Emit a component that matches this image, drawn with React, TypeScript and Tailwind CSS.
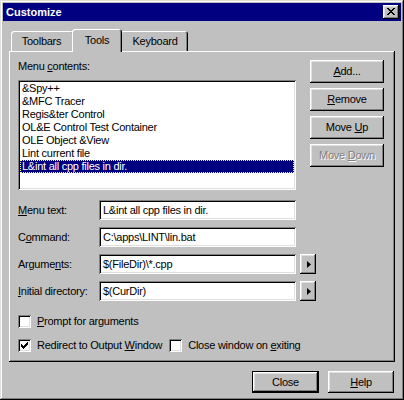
import React from "react";

// Win95 bevels
const raised =
  "shadow-[inset_-1px_-1px_0_#000,inset_1px_1px_0_#fff,inset_-2px_-2px_0_#808080,inset_2px_2px_0_#dfdfdf]";
const sunken =
  "shadow-[inset_1px_1px_0_#808080,inset_-1px_-1px_0_#fff,inset_2px_2px_0_#000,inset_-2px_-2px_0_#dfdfdf]";

const U: React.FC<{ children: React.ReactNode }> = ({ children }) => (
  <span className="underline underline-offset-[1px] decoration-1">{children}</span>
);

const menuItems = [
  "&Spy++",
  "&MFC Tracer",
  "Regis&ter Control",
  "OL&E Control Test Container",
  "OLE Object &View",
  "Lint current file",
  "L&int all cpp files in dir.",
];

const SideButton: React.FC<{ children: React.ReactNode; disabled?: boolean }> = ({
  children,
  disabled,
}) => (
  <div
    className={`w-[74px] h-[23px] flex items-center justify-center bg-[#c0c0c0] ${raised} ${
      disabled ? "text-[#808080] [text-shadow:1px_1px_0_#fff]" : "text-black"
    }`}
  >
    {children}
  </div>
);

const ArrowButton = () => (
  <div className={`ml-[4px] w-[16px] h-[20px] flex items-center justify-center bg-[#c0c0c0] ${raised}`}>
    <svg width="4" height="7" viewBox="0 0 4 7" className="ml-[1px]">
      <path d="M0 0 L4 3.5 L0 7 Z" fill="#000" />
    </svg>
  </div>
);

const Field: React.FC<{ label: React.ReactNode; value: string; arrow?: boolean }> = ({
  label,
  value,
  arrow,
}) => (
  <div className="flex items-center h-[20px]">
    <div className="w-[81px]">{label}</div>
    <div className={`w-[197px] h-[20px] bg-white flex items-center pl-[4px] ${sunken}`}>
      {value}
    </div>
    {arrow && <ArrowButton />}
  </div>
);

const Checkbox: React.FC<{ checked?: boolean }> = ({ checked }) => (
  <div className={`w-[13px] h-[13px] bg-white flex items-center justify-center shrink-0 ${sunken}`}>
    {checked && (
      <svg width="7" height="7" viewBox="0 0 7 7" shapeRendering="crispEdges">
        <path
          d="M0 2h1v1h1v1h1v-1h1v-1h1v-1h1v-1h1v3h-1v1h-1v1h-1v1h-1v1h-1v-1h-1v-1h-1v-1h-1z"
          fill="#000"
        />
      </svg>
    )}
  </div>
);

export default function App() {
  return (
    <div
      className="w-[404px] h-[400px] bg-[#c0c0c0] p-[3px] text-black text-[11px] leading-[13px] tracking-[-0.25px] font-['Liberation_Sans',Arial,sans-serif] shadow-[inset_-1px_-1px_0_#000,inset_1px_1px_0_#dfdfdf,inset_-2px_-2px_0_#808080,inset_2px_2px_0_#fff]"
    >
      {/* title bar */}
      <div className="h-[18px] bg-[#000080] flex items-center justify-between pl-[3px] pr-[2px]">
        <span className="text-white font-bold tracking-normal leading-[18px]">Customize</span>
        <div className={`w-[16px] h-[14px] bg-[#c0c0c0] flex items-center justify-center ${raised}`}>
          <svg width="8" height="7" viewBox="0 0 8 7" shapeRendering="crispEdges" className="-mt-[1px]">
            <path
              d="M0 0h2v1h1v1h2v-1h1v-1h2v1h-1v1h-1v1h-1v1h1v1h1v1h1v1h-2v-1h-1v-1h-2v1h-1v1h-2v-1h1v-1h1v-1h1v-1h-1v-1h-1v-1h-1z"
              fill="#000"
            />
          </svg>
        </div>
      </div>

      <div className="mx-[6px] mt-[8px]">
        {/* tabs */}
        <div className="relative z-10 flex items-end h-[22px] pl-[2px]">
          <div className="w-[63px] h-[20px] flex items-center justify-center pr-[2px] rounded-t-[3px] shadow-[inset_1px_1px_0_#fff,inset_-1px_0_0_#000,inset_-2px_0_0_#808080]">
            Toolbars
          </div>
          <div className="relative z-10 -ml-[2px] w-[50px] h-[23px] -mb-[1px] pb-[1px] flex items-center justify-center bg-[#c0c0c0] rounded-t-[3px] shadow-[inset_1px_1px_0_#fff,inset_-1px_0_0_#000,inset_-2px_0_0_#808080]">
            Tools
          </div>
          <div className="-ml-[2px] w-[68px] h-[20px] flex items-center justify-center pl-[2px] rounded-t-[3px] shadow-[inset_1px_1px_0_#fff,inset_-1px_0_0_#000,inset_-2px_0_0_#808080]">
            Keyboard
          </div>
        </div>

        {/* panel */}
        <div className="h-[311px] pl-[9px] shadow-[inset_-1px_-1px_0_#000,inset_1px_1px_0_#fff,inset_-2px_-2px_0_#808080]">
          <div className="flex pt-[9px]">
            <div className="w-[278px]">
              <div className="h-[20px]">
                Menu <U>c</U>ontents:
              </div>
              <div className={`h-[110px] bg-white p-[2px] ${sunken}`}>
                {menuItems.map((item, i) =>
                  i === menuItems.length - 1 ? (
                    <div
                      key={item}
                      className="h-[13px] pl-[2px] bg-[#000080] text-white outline-1 outline-dotted outline-[#ffff80] -outline-offset-1"
                    >
                      {item}
                    </div>
                  ) : (
                    <div key={item} className="h-[13px] pl-[2px]">
                      {item}
                    </div>
                  )
                )}
              </div>
            </div>
            <div className="ml-[14px] flex flex-col gap-[5px]">
              <SideButton>
                <span>
                  <U>A</U>dd...
                </span>
              </SideButton>
              <SideButton>
                <span>
                  <U>R</U>emove
                </span>
              </SideButton>
              <SideButton>
                <span>
                  Move <U>U</U>p
                </span>
              </SideButton>
              <SideButton disabled>
                <span>
                  Move <U>D</U>own
                </span>
              </SideButton>
            </div>
          </div>

          <div className="mt-[10px] flex flex-col gap-[7px]">
            <Field
              label={
                <span>
                  <U>M</U>enu text:
                </span>
              }
              value="L&int all cpp files in dir."
            />
            <Field
              label={
                <span>
                  C<U>o</U>mmand:
                </span>
              }
              value="C:\apps\LINT\lin.bat"
            />
            <Field
              label={
                <span>
                  Argume<U>n</U>ts:
                </span>
              }
              value="$(FileDir)\*.cpp"
              arrow
            />
            <Field
              label={
                <span>
                  <U>I</U>nitial directory:
                </span>
              }
              value="$(CurDir)"
              arrow
            />
          </div>

          <div className="mt-[14px] flex flex-col gap-[11px]">
            <div className="flex items-center h-[13px]">
              <Checkbox />
              <span className="ml-[6px]">
                <U>P</U>rompt for arguments
              </span>
            </div>
            <div className="flex items-center h-[13px]">
              <Checkbox checked />
              <span className="ml-[6px]">
                Redirect to Output <U>W</U>indow
              </span>
              <div className="ml-[7px]">
                <Checkbox />
              </div>
              <span className="ml-[6px]">
                Close window on <U>e</U>xiting
              </span>
            </div>
          </div>
        </div>

        {/* bottom buttons */}
        <div className="mt-[9px] flex justify-end gap-[9px] pr-[1px]">
          <div className="w-[67px] h-[22px] border border-black">
            <div className={`w-full h-full flex items-center justify-center ${raised}`}>Close</div>
          </div>
          <div className={`w-[66px] h-[22px] flex items-center justify-center ${raised}`}>
            <span>
              <U>H</U>elp
            </span>
          </div>
        </div>
      </div>
    </div>
  );
}
